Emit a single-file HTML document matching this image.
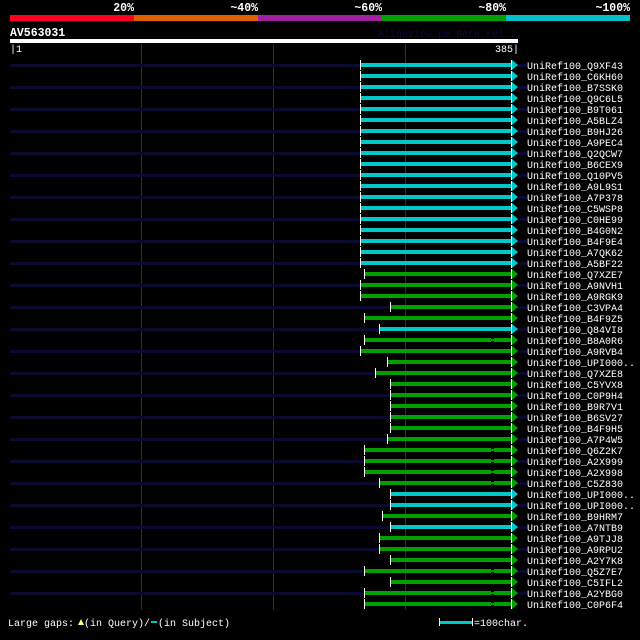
<!DOCTYPE html>
<html><head><meta charset="utf-8"><style>
html,body{margin:0;padding:0;background:#000;width:640px;height:630px;overflow:hidden}
svg{display:block}
text{font-family:"Liberation Mono",monospace;font-size:10px;fill:#fff}
.h{font-size:11.5px;font-weight:bold}
</style></head><body>
<svg width="640" height="630" xmlns="http://www.w3.org/2000/svg">
<text class="h" x="134" y="11" text-anchor="end">20%</text>
<text class="h" x="258" y="11" text-anchor="end">~40%</text>
<text class="h" x="382" y="11" text-anchor="end">~60%</text>
<text class="h" x="506" y="11" text-anchor="end">~80%</text>
<text class="h" x="630" y="11" text-anchor="end">~100%</text>
<rect x="10" y="15" width="124" height="6" fill="#ff0022"/>
<rect x="134" y="15" width="124" height="6" fill="#e06000"/>
<rect x="258" y="15" width="124" height="6" fill="#a020a0"/>
<rect x="382" y="15" width="124" height="6" fill="#00a000"/>
<rect x="506" y="15" width="124" height="6" fill="#00c0c8"/>
<text class="h" x="10" y="36">AV563031</text>
<text x="516" y="37" text-anchor="end" style="fill:#0c0c38">AlignView.pm Beta rel.7</text>
<rect x="10" y="39" width="508" height="4" fill="#fff"/>
<text x="10" y="52">|1</text>
<text x="519" y="52" text-anchor="end">385|</text>
<g stroke="#333310" stroke-width="1">
<line x1="141.5" y1="44" x2="141.5" y2="610"/>
<line x1="273.5" y1="44" x2="273.5" y2="610"/>
<line x1="405.5" y1="44" x2="405.5" y2="610"/>
</g>
<g id="rows"></g>
</svg>
<script>
var d=[["Q9XF43",361,1],["C6KH60",361,1],["B7SSK0",361,1],["Q9C6L5",361,1],["B9T061",361,1],["A5BLZ4",361,1],["B9HJ26",361,1],["A9PEC4",361,1],["Q2QCW7",361,1],["B6CEX9",361,1],["Q10PV5",361,1],["A9L9S1",361,1],["A7P378",361,1],["C5WSP8",361,1],["C0HE99",361,1],["B4G0N2",361,1],["B4F9E4",361,1],["A7QK62",361,1],["A5BF22",361,1],["Q7XZE7",365,0],["A9NVH1",361,0],["A9RGK9",361,0],["C3VPA4",391,0],["B4F9Z5",365,0],["Q84VI8",380,1],["B8A0R6",365,0,1],["A9RVB4",361,0],["UPI000..",388,0],["Q7XZE8",376,0],["C5YVX8",391,0],["C0P9H4",391,0],["B9R7V1",391,0],["B6SV27",391,0],["B4F9H5",391,0],["A7P4W5",388,0],["Q6Z2K7",365,0,1],["A2X999",365,0,1],["A2X998",365,0,1],["C5Z830",380,0,1],["UPI000..",391,1],["UPI000..",391,1],["B9HRM7",383,0],["A7NTB9",391,1],["A9TJJ8",380,0],["A9RPU2",380,0],["A2Y7K8",391,0],["Q5Z7E7",365,0,1],["C5IFL2",391,0],["A2YBG0",365,0,1],["C0P6F4",365,0,1]];
var s="";
d.forEach(function(r,i){var y=65+i*11,c=r[2]?"#00c8c8":"#00a000";
if(i%2==0){s+='<rect x="10" y="'+(y-1)+'" width="'+(r[1]-10)+'" height="3" fill="#0a0a30"/><rect x="517" y="'+(y-1)+'" width="10" height="3" fill="#0a0a30"/>';}
s+='<rect x="'+r[1]+'" y="'+(y-2)+'" width="'+(511-r[1])+'" height="4" fill="'+c+'"/>';
if(r[3])s+='<rect x="491" y="'+(y-2)+'" width="3" height="4" fill="#000"/><rect x="491" y="'+(y-1)+'" width="3" height="2" fill="'+c+'"/>';
s+='<rect x="'+(r[1]-1)+'" y="'+(y-5)+'" width="1" height="10" fill="#fff"/>';
s+='<line x1="511.5" y1="'+(y-5)+'" x2="511.5" y2="'+(y+5)+'" stroke="#fff" stroke-width="1"/>';
s+='<polygon points="512,'+(y-5)+' 518,'+y+' 512,'+(y+5)+'" fill="'+c+'"/>';
s+='<text x="527" y="'+(y+4)+'">UniRef100_'+r[0]+'</text>';});
document.getElementById("rows").innerHTML=s;
</script>
<svg width="640" height="30" style="position:absolute;left:0;top:610px" xmlns="http://www.w3.org/2000/svg">
<text x="8" y="16">Large gaps:</text>
<polygon points="78,15 81,9 84,15" fill="#ffff80"/>
<text x="84" y="16">(in Query)/</text>
<rect x="151" y="11" width="6" height="2" fill="#00c8c8"/>
<text x="158" y="16">(in Subject)</text>
<rect x="440" y="11" width="32" height="3" fill="#00c8c8"/>
<rect x="439" y="8" width="1" height="8" fill="#fff"/>
<rect x="472" y="8" width="1" height="8" fill="#fff"/>
<text x="474" y="16">=100char.</text>
</svg>
</body></html>
